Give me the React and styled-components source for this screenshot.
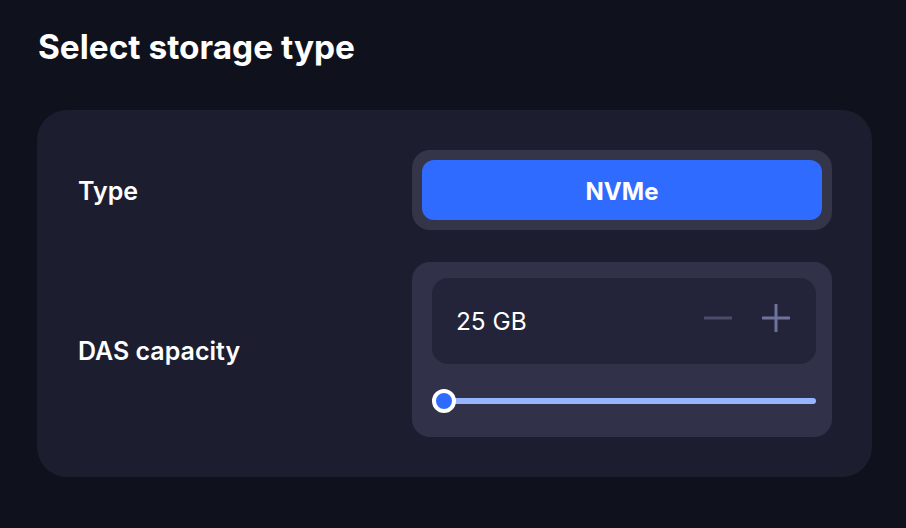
import React, { useState } from "react";
import styled, { createGlobalStyle } from "styled-components";

const Global = createGlobalStyle`
  html, body {
    margin: 0;
    padding: 0;
    background: #0f111c;
  }
  body {
    font-family: Inter, "Noto Sans", sans-serif;
    color: #ffffff;
  }
`;

const Page = styled.div`
  width: 906px;
  height: 528px;
  box-sizing: border-box;
  padding: 26px 34px 0 37px;
  background: #0f111c;
`;

const Title = styled.h1`
  margin: 0 0 0 1px;
  font-size: 33.4px;
  font-weight: 700;
  line-height: 42px;
`;

const Card = styled.div`
  margin-top: 42px;
  width: 835px;
  box-sizing: border-box;
  padding: 40px 40px 40px 41px;
  background: #1c1d2e;
  border-radius: 30px;
  display: flex;
  flex-direction: column;
  gap: 32px;
`;

const Row = styled.div`
  display: flex;
  align-items: center;
  justify-content: space-between;
`;

const Label = styled.div`
  font-size: 25px;
  font-weight: 600;
  line-height: 30px;
  margin-top: 2px;
`;

const Segment = styled.div`
  width: 420px;
  box-sizing: border-box;
  padding: 10px;
  background: #35354a;
  border-radius: 18px;
  display: flex;
`;

const SegButton = styled.button`
  flex: 1;
  height: 60px;
  border: none;
  border-radius: 12px;
  background: ${(p) => (p.$active ? "#2f6bff" : "transparent")};
  color: #ffffff;
  font-family: inherit;
  font-size: 24px;
  font-weight: 700;
  padding: 2px 0 0;
  cursor: pointer;
`;

const Panel = styled.div`
  width: 420px;
  box-sizing: border-box;
  padding: 16px 16px 0 20px;
  height: 175px;
  background: #31314a;
  border-radius: 18px;
  display: flex;
  flex-direction: column;
`;

const Field = styled.div`
  height: 86px;
  box-sizing: border-box;
  padding: 0 26px 0 24px;
  background: #23243a;
  border-radius: 16px;
  display: flex;
  align-items: center;
  justify-content: space-between;
`;

const Value = styled.span`
  font-size: 24.4px;
  font-weight: 400;
`;

const Steppers = styled.div`
  display: flex;
  align-items: center;
  gap: 30px;
  margin-top: -6px;
`;

const Step = styled.button`
  width: 28px;
  height: 28px;
  padding: 0;
  border: none;
  background: none;
  color: ${(p) => (p.$dim ? "#4a4c68" : "#6f7399")};
  cursor: pointer;
  display: flex;
  align-items: center;
  justify-content: center;
`;

const SliderWrap = styled.div`
  margin-top: 25px;
  height: 24px;
  position: relative;
  display: flex;
  align-items: center;
`;

const Track = styled.div`
  flex: 1;
  height: 6px;
  margin-left: 12px;
  border-radius: 3px;
  background: #96b4ff;
`;

const Thumb = styled.div`
  position: absolute;
  left: 0;
  top: 0;
  width: 24px;
  height: 24px;
  box-sizing: border-box;
  border-radius: 50%;
  border: 4px solid #ffffff;
  background: #2f6bff;
`;

const Line = ({ plus }) => (
  <svg width="28" height="28" viewBox="0 0 28 28" fill="none">
    <path d="M1 14h26" stroke="currentColor" strokeWidth="3" strokeLinecap="round" />
    {plus && <path d="M14 1v26" stroke="currentColor" strokeWidth="3" strokeLinecap="round" />}
  </svg>
);

export default function App() {
  const [gb, setGb] = useState(25);
  return (
    <Page>
      <Global />
      <Title>Select storage type</Title>
      <Card>
        <Row>
          <Label>Type</Label>
          <Segment>
            <SegButton $active>NVMe</SegButton>
          </Segment>
        </Row>
        <Row>
          <Label>DAS capacity</Label>
          <Panel>
            <Field>
              <Value>{gb} GB</Value>
              <Steppers>
                <Step $dim onClick={() => setGb(Math.max(25, gb - 25))}>
                  <Line />
                </Step>
                <Step onClick={() => setGb(gb + 25)}>
                  <Line plus />
                </Step>
              </Steppers>
            </Field>
            <SliderWrap>
              <Track />
              <Thumb />
            </SliderWrap>
          </Panel>
        </Row>
      </Card>
    </Page>
  );
}
